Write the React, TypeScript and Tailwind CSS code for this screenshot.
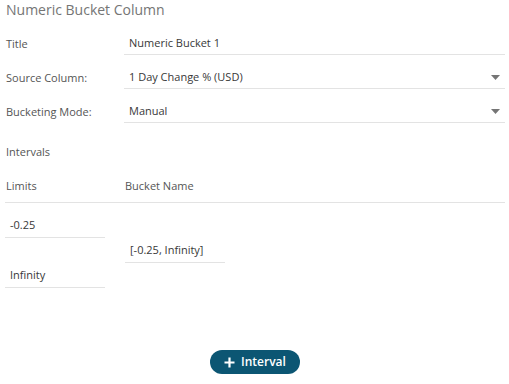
import React from "react";

const font = { fontFamily: '"Open Sans", "Noto Sans", sans-serif' };

function Caret() {
  return (
    <svg width="9" height="5" viewBox="0 0 9 5" className="mr-[5px] mb-[5px]">
      <path d="M0 0 H9 L4.5 5 Z" fill="#757575" />
    </svg>
  );
}

function FieldRow({ label, value, select }: { label: string; value: string; select?: boolean }) {
  return (
    <div className="flex">
      <div className="w-[119px] h-[34px] flex items-end pb-[3px] pl-[1px] text-[11px] leading-[16px] text-[#555]">
        {label}
      </div>
      <div className="flex-1 h-[34px] border-b border-[#e3e3e3] flex items-end justify-between pl-[5px] pb-[3px] text-[11px] leading-[16px] text-[#383838]">
        <span>{value}</span>
        {select && <Caret />}
      </div>
    </div>
  );
}

function LimitInput({ value }: { value: string }) {
  return (
    <div className="w-[100px] h-[35px] border-b border-[#e3e3e3] flex items-end pl-[5px] pb-[4px] text-[11px] leading-[16px] text-[#383838]">
      {value}
    </div>
  );
}

export default function App() {
  return (
    <div className="w-[509px] h-[384px] bg-white flex flex-col pl-[5px] pr-[4px]" style={font}>
      <h1 className="pl-[1px] h-[21px] text-[14px] leading-[20px] text-[#757575] font-normal">
        Numeric Bucket Column
      </h1>

      <FieldRow label="Title" value="Numeric Bucket 1" />
      <FieldRow label="Source Column:" value="1 Day Change % (USD)" select />
      <FieldRow label="Bucketing Mode:" value="Manual" select />

      <div className="pl-[1px] mt-[21px] text-[11px] leading-[16px] text-[#555]">Intervals</div>

      <div className="flex border-b border-[#e3e3e3] mt-[17px] pb-[8px] text-[11px] leading-[17px] text-[#555]">
        <div className="w-[120px] pl-[1px]">Limits</div>
        <div>Bucket Name</div>
      </div>

      <div className="flex items-center">
        <div className="w-[120px] flex flex-col">
          <LimitInput value="-0.25" />
          <div className="h-[15px]" />
          <LimitInput value="Infinity" />
        </div>
        <div className="w-[100px] h-[34px] border-b border-[#e3e3e3] flex items-end pl-[5px] pb-[4px] text-[11px] leading-[16px] text-[#383838]">
          [-0.25, Infinity]
        </div>
      </div>

      <div className="flex justify-center mt-[62px]">
        <button className="w-[90px] h-[24px] rounded-full bg-[#0c5673] text-white text-[12px] leading-[16px] flex items-center justify-center gap-[6px] font-semibold">
          <svg width="11" height="11" viewBox="0 0 11 11">
            <path d="M5.5 0.5 V10.5 M0.5 5.5 H10.5" stroke="white" strokeWidth="2.2" />
          </svg>
          <span>Interval</span>
        </button>
      </div>
    </div>
  );
}
